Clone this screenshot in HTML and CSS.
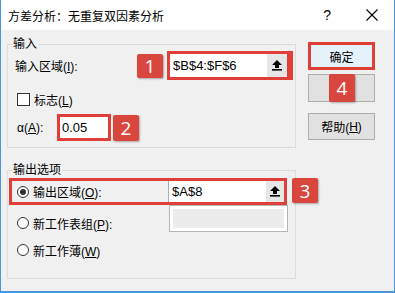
FILE: index.html
```html
<!DOCTYPE html>
<html lang="zh-CN">
  <head>
    <meta charset="UTF-8" />
    <meta name="viewport" content="width=device-width, initial-scale=1.0" />
    <title>方差分析</title>
    <link rel="stylesheet" href="styles.css">
  </head>
  <body>
    <div class="dialog">
      <div class="titlebar">
        <span class="title">方差分析：无重复双因素分析</span>
        <span class="title-q">?</span>
        <span class="title-close">
          <svg width="12" height="12" viewBox="0 0 12 12"><path d="M0.5 0.5 L11.5 11.5 M11.5 0.5 L0.5 11.5" stroke="#000" stroke-width="1.1" fill="none"/></svg>
        </span>
      </div>
      <div class="main">
        <div class="left">
          <fieldset class="group group-in">
            <legend>输入</legend>
            <div class="row-range">
              <span class="lbl">输入区域(<u>I</u>):</span>
              <span class="badge">1</span>
              <div class="ref mark">
                <span class="ref-text">$B$4:$F$6</span>
                <span class="ref-btn">
                  <svg width="10" height="11" viewBox="0 0 10 11"><path d="M5 0 L10 5 H7 V8 H3 V5 H0 Z" fill="#000"/><rect x="0" y="9" width="10" height="1.6" fill="#000"/></svg>
                </span>
              </div>
            </div>
            <div class="row-check">
              <span class="checkbox"></span>
              <span>标志(<u>L</u>)</span>
            </div>
            <div class="row-alpha">
              <span class="lbl-a">α(<u>A</u>):</span>
              <div class="alpha mark">0.05</div>
              <span class="badge">2</span>
            </div>
          </fieldset>
          <fieldset class="group group-out">
            <legend>输出选项</legend>
            <div class="out-row mark">
              <span class="radio on"></span>
              <span class="lbl">输出区域(<u>O</u>):</span>
              <div class="out-ref">
                <span class="ref-text">$A$8</span>
                <span class="ref-btn">
                  <svg width="10" height="11" viewBox="0 0 10 11"><path d="M5 0 L10 5 H7 V8 H3 V5 H0 Z" fill="#000"/><rect x="0" y="9" width="10" height="1.6" fill="#000"/></svg>
                </span>
              </div>
              <span class="badge badge-3">3</span>
            </div>
            <div class="row-sheet">
              <div class="opt">
                <span class="radio"></span>
                <span>新工作表组(<u>P</u>):</span>
              </div>
              <div class="field-off"></div>
            </div>
            <div class="row-book">
              <span class="radio"></span>
              <span>新工作薄(<u>W</u>)</span>
            </div>
          </fieldset>
        </div>
        <div class="buttons">
          <div class="btn btn-ok">确定</div>
          <div class="btn btn-cancel"><span class="badge badge-4">4</span></div>
          <div class="btn btn-help">帮助(<u>H</u>)</div>
        </div>
      </div>
    </div>
  </body>
</html>
```

FILE: styles.css
```css
* {
  box-sizing: border-box;
}
body {
  margin: 0;
  font-family: "Liberation Sans", "Noto Sans CJK SC", sans-serif;
  font-size: 12px;
  color: #000;
  background: #f0f0f0;
}
.dialog {
  width: 395px;
  height: 293px;
  border: 1px solid #4a95df;
  border-top: 0;
  border-bottom-width: 2px;
  background: #f0f0f0;
  display: flex;
  flex-direction: column;
}
.titlebar {
  height: 30px;
  background: #fff;
  display: flex;
  align-items: center;
  padding-left: 7px;
}
.title {
  flex: 1;
}
.title-q {
  font-size: 14px;
  margin-right: 35px;
}
.title-close {
  display: flex;
  margin-right: 16px;
}
.main {
  flex: 1;
  display: flex;
  padding-left: 6px;
}
.left {
  width: 289px;
}
.group {
  margin: 7px 0 0;
  padding: 0 0 6px;
  border: 1px solid #dcdcdc;
  min-width: 0;
}
.group legend {
  margin-left: 4px;
  padding: 0 1px;
  line-height: 14px;
}
.badge {
  width: 26px;
  height: 24px;
  background: #d9463e;
  color: #fff;
  font-family: "Open Sans", "Liberation Sans", sans-serif;
  font-size: 19px;
  display: flex;
  align-items: center;
  justify-content: center;
  border-radius: 2px;
  box-shadow: 1px 1px 2px rgba(0, 0, 0, 0.3);
}
.mark {
  border: 3px solid #e03e36;
}
.row-range {
  display: flex;
  align-items: center;
  height: 29px;
  padding-left: 7px;
}
.row-range .lbl {
  width: 122px;
}
.ref {
  margin-left: 4px;
  width: 126px;
  height: 29px;
  border-right-width: 6px;
  background: #fff;
  display: flex;
}
.ref-text {
  flex: 1;
  padding-left: 3px;
  font-size: 13px;
  line-height: 23px;
}
.ref-btn {
  width: 20px;
  background: #e6e6e6;
  display: flex;
  align-items: center;
  justify-content: center;
}
.row-check {
  display: flex;
  align-items: center;
  gap: 4px;
  height: 13px;
  margin-top: 13px;
  padding-left: 9px;
}
.checkbox {
  width: 13px;
  height: 13px;
  border: 1px solid #333;
  background: #fff;
}
.row-alpha {
  display: flex;
  align-items: center;
  height: 27px;
  margin-top: 8px;
  padding-left: 9px;
}
.lbl-a {
  width: 40px;
}
.alpha {
  width: 54px;
  height: 27px;
  background: #fff;
  padding-left: 2px;
  font-size: 13px;
  line-height: 21px;
}
.row-alpha .badge {
  margin-left: 2px;
  height: 26px;
}
.group-out {
  margin-top: 15px;
  padding-bottom: 21px;
}
.radio {
  width: 12px;
  height: 12px;
  border: 1px solid #333;
  border-radius: 50%;
  background: #fff;
  display: flex;
  align-items: center;
  justify-content: center;
}
.radio.on::after {
  content: "";
  width: 6px;
  height: 6px;
  border-radius: 50%;
  background: #333;
}
.out-row {
  position: relative;
  display: flex;
  align-items: center;
  gap: 4px;
  width: 278px;
  height: 27px;
  margin: 1px 0 0 1px;
  padding-left: 5px;
  border-right-width: 3px;
}
.out-row .lbl {
  flex: 1;
}
.out-ref {
  width: 116px;
  height: 21px;
  background: #fff;
  border-left: 1px solid #adadad;
  display: flex;
}
.out-ref .ref-text {
  line-height: 21px;
}
.out-ref .ref-btn {
  width: 18px;
}
.badge-3 {
  position: absolute;
  left: 280px;
  top: -3px;
  height: 25px;
}
.row-sheet {
  display: flex;
  height: 27px;
  padding-left: 9px;
}
.opt {
  display: flex;
  align-items: center;
  gap: 4px;
  height: 14px;
  margin-top: 11px;
}
.field-off {
  margin-left: auto;
  margin-right: 7px;
  width: 119px;
  height: 27px;
  border: 1px solid #b4b4b4;
  background: #ececec;
  box-shadow: inset 0 0 0 3px #fff;
}
.row-book {
  display: flex;
  align-items: center;
  gap: 4px;
  height: 14px;
  margin-top: 11px;
  padding-left: 9px;
}
.buttons {
  width: 67px;
  margin: 12px 0 0 12px;
}
.btn {
  height: 28px;
  display: flex;
  align-items: center;
  justify-content: center;
  background: #e1e1e1;
  border: 1px solid #adadad;
}
.btn-ok {
  border: 3px solid #e03e36;
  background: #e5f1fb;
}
.btn-cancel {
  position: relative;
  margin-top: 4px;
}
.badge-4 {
  position: absolute;
  left: 20px;
  top: -1px;
  height: 28px;
}
.btn-help {
  margin-top: 11px;
  height: 27px;
}
```
